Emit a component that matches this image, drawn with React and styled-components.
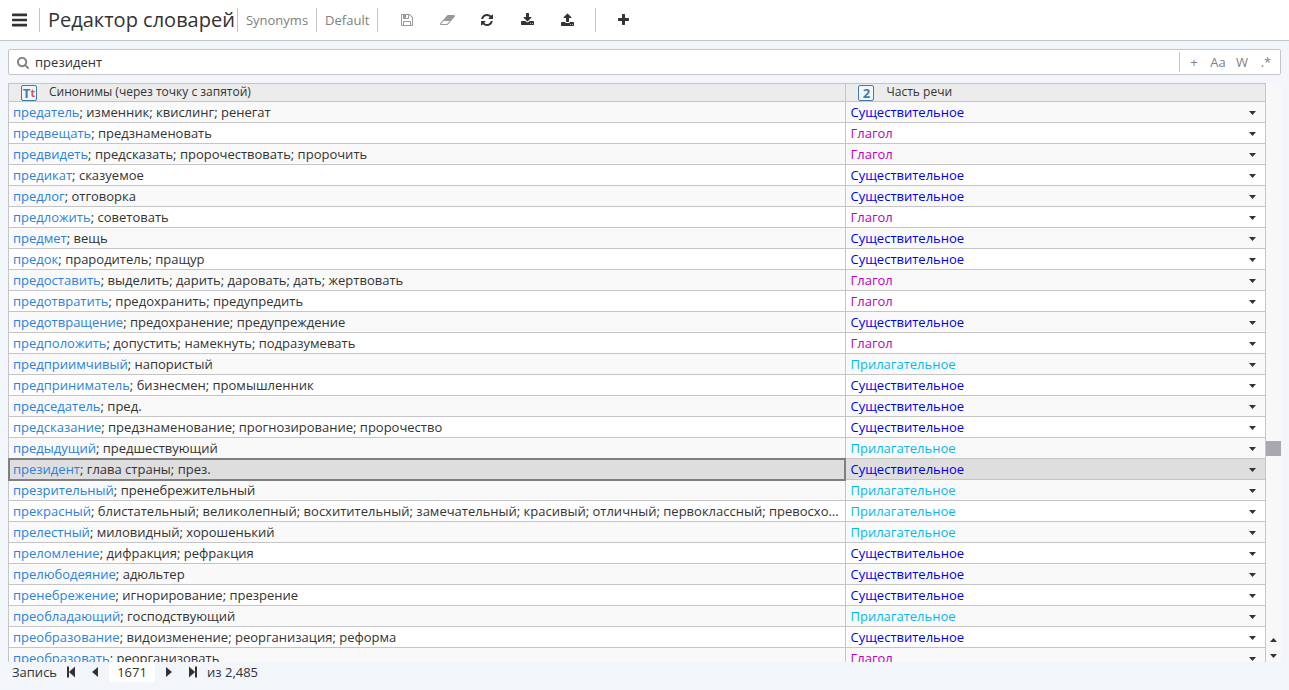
import React, { useState } from 'react';
import styled, { createGlobalStyle, css } from 'styled-components';

const colors = {
    page: '#f2f5fa',
    line: '#c5c5c7',
    text: '#333333',
    muted: '#808080',
    link: '#2a82de',
};

const partColors = {
    'Существительное': '#0000ee',
    'Глагол': '#c000c0',
    'Прилагательное': '#00bbee',
};

const parts = Object.keys(partColors);
const [NOUN, VERB, ADJ] = parts;

const entries = [
    ['предатель', 'изменник; квислинг; ренегат', NOUN],
    ['предвещать', 'предзнаменовать', VERB],
    ['предвидеть', 'предсказать; пророчествовать; пророчить', VERB],
    ['предикат', 'сказуемое', NOUN],
    ['предлог', 'отговорка', NOUN],
    ['предложить', 'советовать', VERB],
    ['предмет', 'вещь', NOUN],
    ['предок', 'прародитель; пращур', NOUN],
    ['предоставить', 'выделить; дарить; даровать; дать; жертвовать', VERB],
    ['предотвратить', 'предохранить; предупредить', VERB],
    ['предотвращение', 'предохранение; предупреждение', NOUN],
    ['предположить', 'допустить; намекнуть; подразумевать', VERB],
    ['предприимчивый', 'напористый', ADJ],
    ['предприниматель', 'бизнесмен; промышленник', NOUN],
    ['председатель', 'пред.', NOUN],
    ['предсказание', 'предзнаменование; прогнозирование; пророчество', NOUN],
    ['предыдущий', 'предшествующий', ADJ],
    ['президент', 'глава страны; през.', NOUN],
    ['презрительный', 'пренебрежительный', ADJ],
    ['прекрасный', 'блистательный; великолепный; восхитительный; замечательный; красивый; отличный; первоклассный; превосходный', ADJ],
    ['прелестный', 'миловидный; хорошенький', ADJ],
    ['преломление', 'дифракция; рефракция', NOUN],
    ['прелюбодеяние', 'адюльтер', NOUN],
    ['пренебрежение', 'игнорирование; презрение', NOUN],
    ['преобладающий', 'господствующий', ADJ],
    ['преобразование', 'видоизменение; реорганизация; реформа', NOUN],
    ['преобразовать', 'реорганизовать', VERB],
];

const icons = {
    bars: [1536, 'M1536 1344v128q0 26-19 45t-45 19h-1408q-26 0-45-19t-19-45v-128q0-26 19-45t45-19h1408q26 0 45 19t19 45zM1536 832v128q0 26-19 45t-45 19h-1408q-26 0-45-19t-19-45v-128q0-26 19-45t45-19h1408q26 0 45 19t19 45zM1536 320v128q0 26-19 45t-45 19h-1408q-26 0-45-19t-19-45v-128q0-26 19-45t45-19h1408q26 0 45 19t19 45z'],
    save: [1536, 'M384 1536h768v-384h-768v384zM1280 1536h128v-896q0-14-10-38.5t-20-34.5l-281-281q-10-10-34-20t-39-10v416q0 40-28 68t-68 28h-576q-40 0-68-28t-28-68v-416h-128v1280h128v-416q0-40 28-68t68-28h832q40 0 68 28t28 68v416zM896 608v-320q0-13-9.5-22.5t-22.5-9.5h-192q-13 0-22.5 9.5t-9.5 22.5v320q0 13 9.5 22.5t22.5 9.5h192q13 0 22.5-9.5t9.5-22.5zM1536 640v928q0 40-28 68t-68 28h-1344q-40 0-68-28t-28-68v-1344q0-40 28-68t68-28h928q40 0 88 20t76 48l280 280q28 28 48 76t20 88z'],
    eraser: [1920, 'M896 1408l336-384h-768l-336 384h768zM1909 331q15 34 9.5 71.5t-30.500 65.5l-896 1024q-38 44-96 44h-768q-38 0-69.500-20.500t-47.500-54.500q-15-34-9.500-71.500t30.500-65.500l896-1024q38-44 96-44h768q38 0 69.500 20.500t47.500 54.500z'],
    refresh: [1536, 'M1511 1056q0 5-1 7-64 268-268 434.5t-478 166.5q-146 0-282.500-55t-243.500-157l-129 129q-19 19-45 19t-45-19-19-45v-448q0-26 19-45t45-19h448q26 0 45 19t19 45-19 45l-137 137q71 66 161 102t187 36q134 0 250-65t186-179q11-17 53-117 8-23 30-23h192q13 0 22.500 9.500t9.500 22.500zM1536 256v448q0 26-19 45t-45 19h-448q-26 0-45-19t-19-45 19-45l138-138q-148-137-349-137-134 0-250 65t-186 179q-11 17-53 117-8 23-30 23h-199q-13 0-22.500-9.500t-9.500-22.500v-7q65-268 270-434.500t480-166.500q146 0 284 55.500t245 156.500l130-129q19-19 45-19t45 19 19 45z'],
    download: [1664, 'M1280 1344q0-26-19-45t-45-19-45 19-19 45 19 45 45 19 45-19 19-45zM1536 1344q0-26-19-45t-45-19-45 19-19 45 19 45 45 19 45-19 19-45zM1664 1120v320q0 40-28 68t-68 28h-1472q-40 0-68-28t-28-68v-320q0-40 28-68t68-28h465l135 136q58 56 136 56t136-56l136-136h464q40 0 68 28t28 68zM1339 551q17 41-14 70l-448 448q-18 19-45 19t-45-19l-448-448q-31-29-14-70 17-39 59-39h256v-448q0-26 19-45t45-19h256q26 0 45 19t19 45v448h256q42 0 59 39z'],
    upload: [1664, 'M1280 1472q0-26-19-45t-45-19-45 19-19 45 19 45 45 19 45-19 19-45zM1536 1472q0-26-19-45t-45-19-45 19-19 45 19 45 45 19 45-19 19-45zM1664 1248v320q0 40-28 68t-68 28h-1472q-40 0-68-28t-28-68v-320q0-40 28-68t68-28h427q21 56 70.500 92t110.500 36h256q61 0 110.500-36t70.500-92h427q40 0 68 28t28 68zM1339 600q-17 40-59 40h-256v448q0 26-19 45t-45 19h-256q-26 0-45-19t-19-45v-448h-256q-42 0-59-40-17-39 14-69l448-448q18-19 45-19t45 19l448 448q31 30 14 69z'],
    plus: [1408, 'M1408 736v192q0 40-28 68t-68 28h-416v416q0 40-28 68t-68 28h-192q-40 0-68-28t-28-68v-416h-416q-40 0-68-28t-28-68v-192q0-40 28-68t68-28h416v-416q0-40 28-68t68-28h192q40 0 68 28t28 68v416h416q40 0 68 28t28 68z'],
    search: [1664, 'M1152 832q0-185-131.500-316.500t-316.500-131.500-316.500 131.500-131.500 316.500 131.500 316.500 316.500 131.500 316.500-131.500 131.500-316.500zM1664 1664q0 52-38 90t-90 38q-54 0-90-38l-343-342q-179 124-399 124-143 0-273.500-55.500t-225-150-150-225-55.500-273.500 55.500-273.500 150-225 225-150 273.500-55.500 273.500 55.500 225 150 150 225 55.500 273.500q0 220-124 399l343 343q37 37 37 90z'],
    first: [1024, 'M0 192h256v1408h-256zM1024 192v1408l-768-704z'],
    prev: [1024, 'M896 256v1280l-768-640z'],
    next: [1024, 'M128 256v1280l768-640z'],
    last: [1024, 'M1024 192h-256v1408h256zM0 192v1408l768-704z'],
};

const GlobalStyle = createGlobalStyle`
    * { box-sizing: border-box; }
    body {
        margin: 0;
        background: ${colors.page};
        color: ${colors.text};
        font: 13px/20px "Open Sans", sans-serif;
    }
    button, input, select { font: inherit; color: inherit; }
`;

const Page = styled.div`
    display: flex;
    flex-direction: column;
    height: 100vh;
`;

const Toolbar = styled.header`
    display: flex;
    flex: none;
    align-items: center;
    height: 41px;
    background: #fff;
    border-bottom: 1px solid ${colors.line};
`;

const Title = styled.h1`
    margin: 0;
    padding: 0 2px 0 8px;
    font-size: 20px;
    line-height: 24px;
    font-weight: 400;
`;

const Crumb = styled.a`
    padding: 0 8px;
    color: ${colors.muted};
    text-decoration: none;
`;

const Divider = styled.span`
    flex: none;
    width: 1px;
    height: ${({ $short }) => ($short ? 20 : 24)}px;
    background: ${colors.line};
`;

const IconButton = styled.button`
    display: flex;
    align-items: center;
    justify-content: center;
    flex: none;
    width: 40px;
    height: 24px;
    padding: 0;
    border: 0;
    background: none;

    &:disabled { color: #999; }
`;

const MenuButton = styled(IconButton)`
    width: 39px;
`;

const Tools = styled.div`
    display: flex;
    padding: 0 8px 0 9px;
`;

const Tail = styled.div`
    padding-left: 7px;
`;

const Content = styled.main`
    display: flex;
    flex: 1;
    flex-direction: column;
    min-height: 0;
    padding: 8px 8px 0;
`;

const SearchBar = styled.form`
    display: flex;
    flex: none;
    align-items: center;
    height: 26px;
    margin-bottom: 8px;
    padding: 0 2px 0 8px;
    background: #fff;
    border: 1px solid ${colors.line};
    border-radius: 2px;
`;

const SearchLabel = styled.label`
    display: flex;
    color: ${colors.muted};
`;

const SearchInput = styled.input`
    flex: 1;
    min-width: 0;
    padding: 0 6px;
    border: 0;
    outline: 0;
    background: none;
`;

const SearchOption = styled.button`
    width: 24px;
    padding: 0;
    border: 0;
    background: none;
    color: ${colors.muted};
    text-align: center;
`;

const SearchOptions = styled.div`
    display: flex;
    padding-left: 2px;
`;

const GridArea = styled.div`
    display: flex;
    flex: 1;
    min-height: 0;
    overflow: hidden;
`;

const Table = styled.table`
    flex: 1;
    width: 100%;
    height: min-content;
    table-layout: fixed;
    border-spacing: 0;
    border: 1px solid ${colors.line};
`;

const cellLine = css`
    border-bottom: 1px solid ${colors.line};

    & + & { border-left: 1px solid ${colors.line}; }
`;

const HeadCell = styled.th`
    height: 18px;
    padding: 0 0 0 12px;
    background: #ececec;
    font-size: 12px;
    line-height: 16px;
    font-weight: 400;
    text-align: left;
    ${cellLine}
`;

const HeadContent = styled.div`
    display: flex;
    align-items: flex-start;
    gap: 12px;
    height: 17px;
`;

const Badge = styled.span`
    display: flex;
    align-items: center;
    justify-content: center;
    flex: none;
    width: 16px;
    height: 16px;
    margin-top: 1px;
    border: 1px solid #3d7da8;
    border-radius: 2px;
    background: #f3f6f8;
    color: #3d7da8;
    font-size: 13px;
    line-height: 14px;
    font-weight: 700;

    small {
        color: #d9534f;
        font-size: 11px;
    }
`;

const Row = styled.tr`
    background: #fff;

    &:nth-child(odd) { background: #f9f9f9; }

    ${({ $selected }) => $selected && css`
        &&& { background: #dedede; }
    `}
`;

const Cell = styled.td`
    height: 21px;
    padding: 0 4px;
    overflow: hidden;
    white-space: nowrap;
    text-overflow: ellipsis;
    ${cellLine}

    ${({ $active }) => $active && css`
        outline: 2px solid #7f7f7f;
        outline-offset: -1px;
    `}
`;

const Word = styled.span`
    color: ${colors.link};
`;

const PartBox = styled.div`
    display: flex;
    align-items: center;
    height: 20px;
    padding-right: 5px;
`;

const PartSelect = styled.select`
    flex: 1;
    min-width: 0;
    height: 20px;
    padding: 0;
    border: 0;
    outline: 0;
    appearance: none;
    background: none;
    color: ${({ $part }) => partColors[$part]};
`;

const Track = styled.div`
    display: flex;
    flex: none;
    flex-direction: column;
    align-items: center;
    width: 15px;
    background: #f8f8f8;
`;

const Before = styled.div`
    flex: 358;
`;

const Thumb = styled.div`
    flex: none;
    width: 15px;
    height: 15px;
    background: #a8a9ad;
`;

const After = styled.div`
    flex: 176;
`;

const StepButton = styled.button`
    display: flex;
    align-items: center;
    justify-content: center;
    width: 15px;
    height: 15px;
    padding: 0;
    border: 0;
    background: none;
`;

const Footer = styled.footer`
    display: flex;
    flex: none;
    align-items: center;
    height: 28px;
    padding: 0 12px 8px;
`;

const NavButton = styled(IconButton)`
    width: 24px;
    height: 20px;
`;

const RecordLabel = styled.label`
    margin-right: 2px;
`;

const RecordInput = styled.input`
    width: 46px;
    height: 20px;
    margin: 0 2px;
    padding: 0;
    border: 0;
    border-radius: 2px;
    background: #fff;
    text-align: center;
`;

const Total = styled.span`
    margin-left: 2px;
`;

// 128 glyph units per pixel at the base size of 14px
const Icon = ({ name, size = 14 }) => {
    const [width, d] = icons[name];
    return (
        <svg width={(width / 1792) * size} height={size} viewBox={`0 0 ${width} 1792`} fill="currentColor" aria-hidden="true">
            <path d={d} />
        </svg>
    );
};

const Caret = ({ up }) => (
    <svg width="7" height="6" viewBox="0 0 7 6" fill="currentColor" aria-hidden="true">
        <path d={up ? 'M0 5h7L3.500 1z' : 'M0 2h7L3.500 6z'} />
    </svg>
);

const EntryRow = ({ entry, selected }) => {
    const [word, synonyms, initial] = entry;
    const [part, setPart] = useState(initial);
    return (
        <Row $selected={selected}>
            <Cell $active={selected}><Word>{word}</Word>; {synonyms}</Cell>
            <Cell>
                <PartBox>
                    <PartSelect
                        $part={part}
                        aria-label={`Часть речи: ${word}`}
                        value={part}
                        onChange={e => setPart(e.target.value)}
                    >
                        {parts.map(p => <option key={p}>{p}</option>)}
                    </PartSelect>
                    <Caret />
                </PartBox>
            </Cell>
        </Row>
    );
};

export default function App() {
    return (
        <Page>
            <GlobalStyle />
            <Toolbar>
                <MenuButton aria-label="Меню"><Icon name="bars" size={18} /></MenuButton>
                <Divider />
                <Title>Редактор словарей</Title>
                <Divider />
                <Crumb href="#synonyms">Synonyms</Crumb>
                <Divider />
                <Crumb href="#default">Default</Crumb>
                <Divider />
                <Tools>
                    <IconButton aria-label="Сохранить" disabled><Icon name="save" /></IconButton>
                    <IconButton aria-label="Очистить" disabled><Icon name="eraser" /></IconButton>
                    <IconButton aria-label="Обновить"><Icon name="refresh" /></IconButton>
                    <IconButton aria-label="Импорт"><Icon name="download" /></IconButton>
                    <IconButton aria-label="Экспорт"><Icon name="upload" /></IconButton>
                </Tools>
                <Divider />
                <Tail>
                    <IconButton aria-label="Добавить"><Icon name="plus" /></IconButton>
                </Tail>
            </Toolbar>
            <Content>
                <SearchBar onSubmit={e => e.preventDefault()}>
                    <SearchLabel htmlFor="search" aria-label="Поиск"><Icon name="search" size={13} /></SearchLabel>
                    <SearchInput id="search" defaultValue="президент" />
                    <Divider $short />
                    <SearchOptions>
                        {['+', 'Aa', 'W', '.*'].map(option => (
                            <SearchOption key={option} type="button">{option}</SearchOption>
                        ))}
                    </SearchOptions>
                </SearchBar>
                <GridArea>
                    <Table>
                        <colgroup>
                            <col width="66.6%" />
                            <col />
                        </colgroup>
                        <thead>
                            <tr>
                                <HeadCell>
                                    <HeadContent><Badge>T<small>t</small></Badge>Синонимы (через точку с запятой)</HeadContent>
                                </HeadCell>
                                <HeadCell>
                                    <HeadContent><Badge>2</Badge>Часть речи</HeadContent>
                                </HeadCell>
                            </tr>
                        </thead>
                        <tbody>
                            {entries.map(entry => (
                                <EntryRow key={entry[0]} entry={entry} selected={entry[0] === 'президент'} />
                            ))}
                        </tbody>
                    </Table>
                    <Track>
                        <Before />
                        <Thumb />
                        <After />
                        <StepButton aria-label="Вверх"><Caret up /></StepButton>
                        <StepButton aria-label="Вниз"><Caret /></StepButton>
                    </Track>
                </GridArea>
            </Content>
            <Footer>
                <RecordLabel htmlFor="record">Запись</RecordLabel>
                <NavButton aria-label="Первая"><Icon name="first" /></NavButton>
                <NavButton aria-label="Предыдущая"><Icon name="prev" /></NavButton>
                <RecordInput id="record" defaultValue="1671" />
                <NavButton aria-label="Следующая"><Icon name="next" /></NavButton>
                <NavButton aria-label="Последняя"><Icon name="last" /></NavButton>
                <Total>из 2,485</Total>
            </Footer>
        </Page>
    );
}
